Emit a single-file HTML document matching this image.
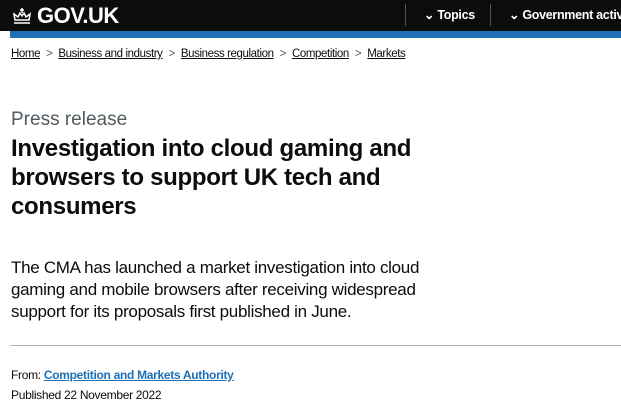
<!DOCTYPE html>
<html><head><meta charset="utf-8"><style>
*{margin:0;padding:0;box-sizing:border-box}
body{width:621px;height:414px;overflow:hidden;background:#fff;font-family:"Liberation Sans",Arial,sans-serif;color:#0b0c0c}
.hdr{position:absolute;top:0;left:0;width:621px;height:31px;background:#0b0c0c;color:#fff}
.blue{position:absolute;top:31px;left:10px;width:611px;height:7px;background:#1d70b8}
.logo{position:absolute;left:11px;top:3px;font-weight:bold;font-size:22px;letter-spacing:-0.5px}
.sep{position:absolute;top:4px;width:1px;height:22px;background:#555}
.nav{position:absolute;top:7px;font-weight:bold;font-size:12.5px;white-space:nowrap;letter-spacing:-0.3px}
.bc{position:absolute;top:48px;left:11px;font-size:11.5px;white-space:nowrap;letter-spacing:-0.4px}
.bc a{color:#0b0c0c;text-decoration:underline}
.bc span{margin:0 6px;color:#505a5f}
.cap{position:absolute;top:109px;left:11px;font-size:19px;color:#505a5f}
h1{position:absolute;top:134px;left:11px;font-size:24px;line-height:29px;font-weight:bold;letter-spacing:-0.3px;width:440px}
.lead{position:absolute;top:257px;left:11px;font-size:17px;line-height:22px;letter-spacing:-0.3px;width:420px}
hr{position:absolute;top:345px;left:10px;width:611px;border:0;border-top:1px solid #b1b4b6}
.meta{position:absolute;left:11px;font-size:12px;letter-spacing:-0.3px}
.meta a{color:#1d70b8;font-weight:bold;text-decoration:underline}
</style></head><body>
<div class="hdr">
<div class="logo"><svg width="22" height="18" viewBox="0 0 22 18" style="vertical-align:-2px;margin-right:4px"><g fill="none" stroke="#fff" stroke-width="1.5"><path d="M3 16h16M4 13h14l1-6-4 3-2-4-2 3-2-3-2 4-4-3z"/><path d="M11 1v5M9 3h4"/></g></svg>GOV.UK</div>
<div class="sep" style="left:405px"></div>
<div class="nav" style="left:424px">&#8964; Topics</div>
<div class="sep" style="left:490px"></div>
<div class="nav" style="left:509px">&#8964; Government activity</div>
</div>
<div class="blue"></div>
<div class="bc"><a>Home</a><span>&gt;</span><a>Business and industry</a><span>&gt;</span><a>Business regulation</a><span>&gt;</span><a>Competition</a><span>&gt;</span><a>Markets</a></div>
<div class="cap">Press release</div>
<h1>Investigation into cloud gaming and browsers to support UK tech and consumers</h1>
<div class="lead">The CMA has launched a market investigation into cloud gaming and mobile browsers after receiving widespread support for its proposals first published in June.</div>
<hr>
<div class="meta" style="top:368px">From: <a>Competition and Markets Authority</a></div>
<div class="meta" style="top:388px">Published 22 November 2022</div>
</body></html>
